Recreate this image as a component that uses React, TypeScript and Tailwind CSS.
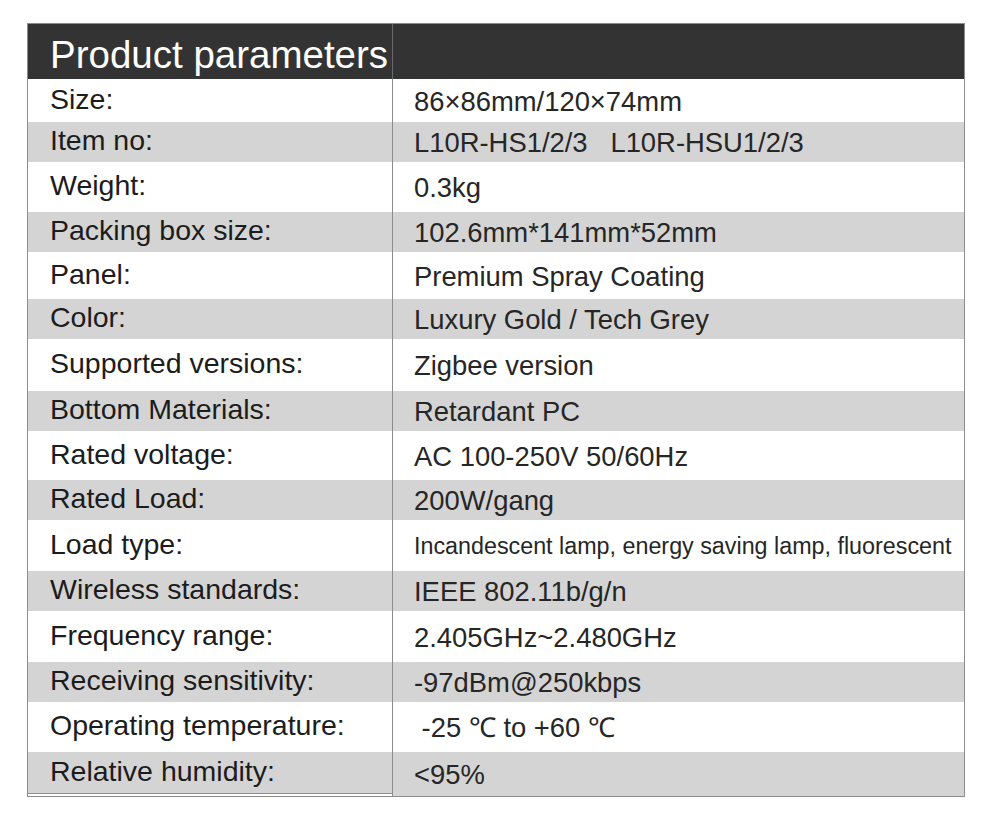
const rows: { label: string; value: string; h: string; small?: boolean }[] = [
  { label: 'Size:', value: '86×86mm/120×74mm', h: 'h-[43px]' },
  { label: 'Item no:', value: 'L10R-HS1/2/3\u00a0\u00a0\u00a0L10R-HSU1/2/3', h: 'h-[40px]' },
  { label: 'Weight:', value: '0.3kg', h: 'h-[50px]' },
  { label: 'Packing box size:', value: '102.6mm*141mm*52mm', h: 'h-[40px]' },
  { label: 'Panel:', value: 'Premium Spray Coating', h: 'h-[47px]' },
  { label: 'Color:', value: 'Luxury Gold / Tech Grey', h: 'h-[40px]' },
  { label: 'Supported versions:', value: 'Zigbee version', h: 'h-[52px]' },
  { label: 'Bottom Materials:', value: 'Retardant PC', h: 'h-[40px]' },
  { label: 'Rated voltage:', value: 'AC 100-250V 50/60Hz', h: 'h-[49px]' },
  { label: 'Rated Load:', value: '200W/gang', h: 'h-[40px]' },
  { label: 'Load type:', value: 'Incandescent lamp, energy saving lamp, fluorescent', h: 'h-[51px]', small: true },
  { label: 'Wireless standards:', value: 'IEEE 802.11b/g/n', h: 'h-[40px]' },
  { label: 'Frequency range:', value: '2.405GHz~2.480GHz', h: 'h-[51px]' },
  { label: 'Receiving sensitivity:', value: '-97dBm@250kbps', h: 'h-[40px]' },
  { label: 'Operating temperature:', value: '\u00a0-25 ℃ to +60 ℃', h: 'h-[50px]' },
  { label: 'Relative humidity:', value: '<95%', h: 'h-[44px]' },
];

export default function App() {
  return (
    <div className="w-[1000px] h-[831px] bg-white pt-[23px] pl-[27px] font-['Liberation_Sans',Arial,sans-serif]">
      <div className="w-[938px] border border-[#8c8c8c]">
        {/* header */}
        <div className="flex h-[55px] bg-[#333333]">
          <div className="w-[365px] border-r border-[#6a6a6a] pl-[22px] flex items-center">
            <span className="text-[38.5px] leading-none text-white pt-[8px]">Product parameters</span>
          </div>
          <div className="flex-1" />
        </div>

        {rows.map((r, i) => {
          const grey = i % 2 === 1;
          const last = i === rows.length - 1;
          return (
            <div key={r.label} className={`flex ${r.h} ${grey ? 'bg-[#d4d4d4]' : 'bg-white'}`}>
              <div className="w-[365px] border-r border-[#8c8c8c] flex flex-col">
                <div
                  className={`flex-1 flex items-center pl-[22px] ${last ? 'border-b border-[#8c8c8c]' : ''}`}
                >
                  <span className="text-[28.5px] leading-none text-[#1c1c1c] pb-[3px]">{r.label}</span>
                </div>
                {last && <div className="h-[2px] bg-white" />}
              </div>
              <div className="flex-1 flex items-center pl-[21px]">
                <span
                  className={`${r.small ? 'text-[23.3px]' : 'text-[27.4px]'} leading-none text-[#262626] pt-[2px] whitespace-nowrap`}
                >
                  {r.value}
                </span>
              </div>
            </div>
          );
        })}
      </div>
    </div>
  );
}
